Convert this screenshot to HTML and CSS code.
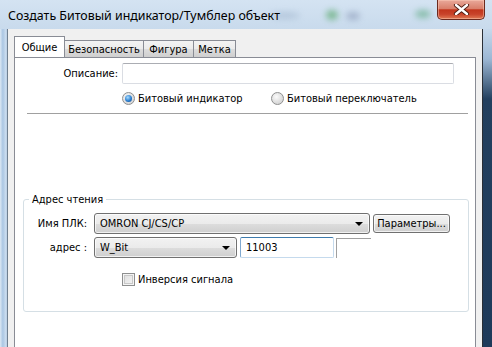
FILE: index.html
```html
<!DOCTYPE html>
<html lang="ru">
<head>
<meta charset="utf-8">
<link rel="stylesheet" href="styles.css">
</head>
<body>
<div class="window">
  <div class="titlebar">
    <span class="title">Создать Битовый индикатор/Тумблер объект</span>
    <span class="blob b1"></span>
    <span class="blob b2"></span>
    <span class="blob b3"></span>
    <span class="blob b4"></span>
    <div class="close">
      <svg width="17" height="11" viewBox="0 0 17 11">
        <path d="M3 1 L14 10 M14 1 L3 10" stroke="#4a1a10" stroke-width="4.2" stroke-linecap="round"/>
        <path d="M3 1 L14 10 M14 1 L3 10" stroke="#ffffff" stroke-width="2.4" stroke-linecap="round"/>
      </svg>
    </div>
  </div>
  <div class="frame-row">
    <div class="frame-left"></div>
    <div class="client">
      <div class="tabs">
        <div class="tab active">Общие</div>
        <div class="tab t2">Безопасность</div>
        <div class="tab t3">Фигура</div>
        <div class="tab t4">Метка</div>
      </div>
      <div class="panel">
        <div class="desc-row">
          <span class="desc-label">Описание:</span>
          <div class="textbox desc-box"></div>
        </div>
        <div class="radio-row">
          <span class="radio on"></span><span class="rtext r1text">Битовый индикатор</span>
          <span class="radio"></span><span class="rtext">Битовый переключатель</span>
        </div>
        <div class="sep"></div>
        <fieldset class="group">
          <legend>Адрес чтения</legend>
          <div class="row r-plc">
            <span class="lbl">Имя ПЛК:</span>
            <div class="combo plc">OMRON CJ/CS/CP<i class="arrow"></i></div>
            <div class="btn">Параметры...</div>
          </div>
          <div class="row r-addr">
            <span class="lbl">адрес :</span>
            <div class="combo addr">W_Bit<i class="arrow"></i></div>
            <div class="textbox num">11003</div>
            <div class="static"></div>
          </div>
          <div class="check-row">
            <span class="check"></span><span class="ctext">Инверсия сигнала</span>
          </div>
        </fieldset>
      </div>
    </div>
    <div class="frame-right"></div>
  </div>
</div>
</body>
</html>
```

FILE: styles.css
```css
html, body {
  margin: 0;
  padding: 0;
  width: 492px;
  height: 347px;
  overflow: hidden;
  background: #c5d8eb;
}

.window {
  position: relative;
  width: 492px;
  height: 347px;
  display: flex;
  flex-direction: column;
  font-family: "DejaVu Sans", "Liberation Sans", sans-serif;
  font-stretch: condensed;
  font-size: 11px;
  color: #000;
  background: linear-gradient(#d4e3f2, #c4d7ea 40px, #bcd2e8);
}

.titlebar {
  position: relative;
  height: 29px;
  flex: none;
  overflow: hidden;
}

.title {
  position: absolute;
  left: 8px;
  top: 7px;
  line-height: 17px;
  font-family: "Noto Sans", "Open Sans", sans-serif;
  font-stretch: normal;
  font-size: 12.4px;
  white-space: nowrap;
  z-index: 2;
}

.blob {
  position: absolute;
  border-radius: 50%;
  filter: blur(3px);
  opacity: 0.55;
}
.b1 { left: 326px; top: 10px; width: 12px; height: 10px; background: #3a9a4a; }
.b2 { left: 346px; top: 12px; width: 14px; height: 8px; background: #8090b0; }
.b3 { left: 415px; top: 10px; width: 16px; height: 8px; background: #4aa070; }
.b4 { left: 270px; top: 12px; width: 30px; height: 7px; background: #9fb4cc; }

.close {
  position: absolute;
  right: 7px;
  top: 0;
  width: 46px;
  height: 19px;
  border: 1px solid #6b2a1e;
  border-top: none;
  border-radius: 0 0 5px 5px;
  background: linear-gradient(#e9a99a, #d9806b 45%, #c2361d 52%, #c8432a 75%, #e07a55);
  box-shadow: inset 0 0 0 1px rgba(255, 210, 190, 0.45);
  display: flex;
  align-items: center;
  justify-content: center;
  z-index: 3;
}

.frame-row {
  flex: 1;
  display: flex;
  min-height: 0;
}

.frame-left {
  width: 7px;
  flex: none;
  border-right: 1px solid #6f7f90;
  background: linear-gradient(90deg, #dce8f4, #aac6e3 40%, #c9dbee 80%, #b8cde4);
}

.frame-right {
  width: 9px;
  flex: none;
  border-left: 1px solid #2a2f36;
  background: linear-gradient(#c6d9ec, #9cb7d4 30px, #23405f 70px, #1e3a5a);
}

.client {
  width: 474px;
  flex: none;
  background: #f0f0f0;
  padding: 8px 6px 0 6px;
  box-sizing: border-box;
  display: flex;
  flex-direction: column;
}

.tabs {
  display: flex;
  align-items: flex-end;
  height: 20px;
  position: relative;
  z-index: 2;
}

.tab {
  height: 16px;
  line-height: 17px;
  border: 1px solid #898c95;
  border-bottom: none;
  margin-left: -1px;
  text-align: center;
  background: linear-gradient(#f3f3f3, #ebebeb 50%, #dddddd 51%, #cfcfcf);
  white-space: nowrap;
  box-sizing: content-box;
}
.tab.active {
  margin-left: 0;
  height: 20px;
  line-height: 21px;
  width: 49px;
  background: #fff;
  position: relative;
  z-index: 3;
}
.t2 { width: 78px; }
.t3 { width: 49px; }
.t4 { width: 41px; }

.panel {
  flex: 1;
  background: #fff;
  border: 1px solid #898c95;
  border-bottom: none;
  display: flex;
  flex-direction: column;
}

.desc-row {
  display: flex;
  align-items: center;
  margin-top: 5px;
  gap: 4px;
}
.desc-label {
  width: 103px;
  text-align: right;
}

.textbox {
  box-sizing: border-box;
  height: 21px;
  border: 1px solid #dadde3;
  border-top-color: #abadb3;
  border-radius: 2px;
  background: #fff;
}
.desc-box { width: 332px; }

.radio-row {
  display: flex;
  align-items: center;
  margin-top: 8px;
  margin-left: 107px;
  height: 13px;
}
.radio {
  width: 11px;
  height: 11px;
  border-radius: 50%;
  border: 1px solid #8e8f8f;
  background: radial-gradient(circle at 40% 35%, #fbfbfb, #dcdcdc 60%, #cfcfcf);
  flex: none;
  position: relative;
}
.radio.on::after {
  content: "";
  position: absolute;
  left: 2px;
  top: 2px;
  width: 7px;
  height: 7px;
  border-radius: 50%;
  background: radial-gradient(circle at 40% 35%, #a8dcff, #2b7fd0 55%, #0c3f80);
}
.rtext { margin-left: 3px; line-height: 13px; }
.r1text { width: 133px; flex: none; }

.sep {
  height: 0;
  border-top: 1px solid #a0a0a0;
  margin: 8px 7px 0 12px;
}

.group {
  margin: 78px 6px 0 8px;
  padding: 0;
  border: 1px solid #d5dfe5;
  border-radius: 3px;
  height: 120px;
  box-sizing: border-box;
  min-width: 0;
}
.group legend {
  margin-left: 5px;
  padding: 0 3px;
  line-height: 15px;
}

.row {
  display: flex;
  align-items: center;
  height: 21px;
}
.r-plc { margin-top: 6px; }
.r-addr { margin-top: 3px; }

.lbl {
  width: 63px;
  text-align: right;
  margin-right: 7px;
  flex: none;
}

.combo {
  position: relative;
  box-sizing: border-box;
  height: 21px;
  line-height: 19px;
  padding-left: 5px;
  border: 1px solid #707070;
  border-radius: 3px;
  background: linear-gradient(#f2f2f2, #ebebeb 50%, #dddddd 51%, #cfcfcf);
  box-shadow: inset 0 0 0 1px rgba(255, 255, 255, 0.7);
  flex: none;
}
.plc { width: 276px; }
.addr { width: 143px; }
.arrow {
  position: absolute;
  right: 6px;
  top: 8px;
  width: 0;
  height: 0;
  border-left: 4px solid transparent;
  border-right: 4px solid transparent;
  border-top: 4px solid #000;
}

.btn {
  box-sizing: border-box;
  margin-left: 3px;
  width: 77px;
  height: 19px;
  line-height: 17px;
  text-align: center;
  border: 1px solid #707070;
  border-radius: 3px;
  background: linear-gradient(#f2f2f2, #ebebeb 50%, #dddddd 51%, #cfcfcf);
  box-shadow: inset 0 0 0 1px rgba(255, 255, 255, 0.7);
  flex: none;
}

.num {
  width: 94px;
  margin-left: 3px;
  line-height: 19px;
  padding-left: 5px;
  border-color: #c5daed;
  border-top-color: #3d7bad;
  border-left-color: #7fa9d1;
  flex: none;
}

.static {
  box-sizing: border-box;
  margin-left: 2px;
  width: 35px;
  height: 20px;
  border-top: 1px solid #a0a0a0;
  border-left: 1px solid #a0a0a0;
  flex: none;
}

.check-row {
  display: flex;
  align-items: center;
  margin-top: 15px;
  margin-left: 98px;
  height: 13px;
}
.check {
  box-sizing: border-box;
  width: 13px;
  height: 13px;
  border: 1px solid #8e8f8f;
  background: linear-gradient(135deg, #dcdcdc, #f6f6f6);
  box-shadow: inset 0 0 0 1px #f4f4f4, inset 0 0 0 2px #c8c8c8;
  flex: none;
}
.ctext { margin-left: 3px; line-height: 13px; }
```
